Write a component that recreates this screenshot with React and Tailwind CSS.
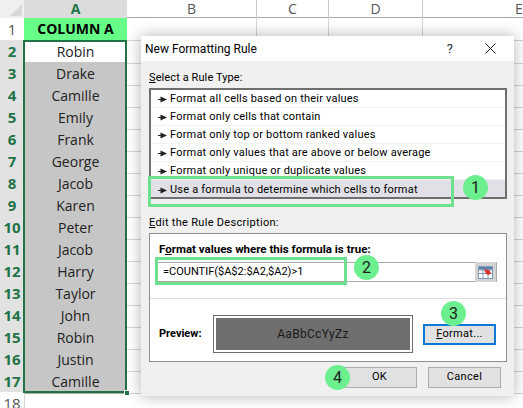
const names = ["Robin", "Drake", "Camille", "Emily", "Frank", "George", "Jacob", "Karen", "Peter", "Jacob", "Harry", "Taylor", "John", "Robin", "Justin", "Camille"];

const ruleTypes = [
  "Format all cells based on their values",
  "Format only cells that contain",
  "Format only top or bottom ranked values",
  "Format only values that are above or below average",
  "Format only unique or duplicate values",
  "Use a formula to determine which cells to format",
];

function Arrow() {
  return (
    <svg width="9" height="7" viewBox="0 0 9 7" className="shrink-0">
      <path d="M0 3h4v1H0z" fill="#222" />
      <path d="M2.5 0.5L9 3.5 2.5 6.5z" fill="#222" />
    </svg>
  );
}

function Step({ n, className }) {
  return (
    <div className={`absolute flex h-[25px] w-[25px] items-center justify-center rounded-full bg-[#6cf08f] text-[16px] text-[#222] ${className}`}>
      {n}
    </div>
  );
}

function RefIcon() {
  return (
    <svg width="15" height="15" viewBox="0 0 15 15">
      <rect x="0.5" y="1.5" width="14" height="12" fill="#fff" stroke="#7f9db9" />
      <path d="M0.5 5h14M0.5 8.5h14M5 1.5v12M10 1.5v12" stroke="#7f9db9" strokeWidth="1" />
      <rect x="1" y="2" width="13" height="2.5" fill="#5b7fa8" />
      <path d="M6 4l5 1 2 3-2 2-3-1z" fill="#d9322c" />
    </svg>
  );
}

function Sheet() {
  return (
    <div className="font-['Open_Sans',sans-serif] text-[#222]">
      <div className="grid h-[18px] grid-cols-[24px_103px_130px_72px_94px_100px] border-b border-[#a6a6a6] bg-white text-[14px] leading-[18px] text-[#555]">
        <div className="flex items-end justify-end bg-[#f0f0f0] p-[2px]">
          <div className="h-0 w-0 border-b-[12px] border-l-[12px] border-b-[#d8d8d8] border-l-transparent" />
        </div>
        <div className="bg-[#dcdcdc] text-center font-bold text-[#217346]">A</div>
        <div className="border-r border-[#c8c8c8] text-center">B</div>
        <div className="border-r border-[#c8c8c8] text-center">C</div>
        <div className="border-r border-[#c8c8c8] text-center">D</div>
        <div className="pl-[92px]">E</div>
      </div>
      <div className="grid h-[22px] grid-cols-[24px_103px_130px_72px_94px_100px]">
        <div className="border-b border-[#d4d4d4] bg-white text-center text-[15px] leading-[22px] text-[#555]">1</div>
        <div className="bg-[#66ff88] text-center text-[14px] font-bold leading-[22px] text-black">COLUMN A</div>
        <div className="border-b border-r border-[#d4d4d4]" />
        <div className="border-b border-r border-[#d4d4d4]" />
        <div className="border-b border-r border-[#d4d4d4]" />
        <div className="border-b border-[#d4d4d4]" />
      </div>
      {names.map((name, i) => (
        <div key={i} className="grid h-[22px] grid-cols-[24px_103px_130px_72px_94px_100px]">
          <div className="border-b border-[#c8c8c8] bg-[#e2e2e2] text-center text-[15px] font-bold leading-[22px] text-[#217346]">{i + 2}</div>
          <div className={`border-b text-center text-[14px] leading-[23px] ${i === 0 ? "border-[#d4d4d4] bg-white" : "border-[#aaaaaa] bg-[#c6c6c6]"}`}>{name}</div>
          <div className="border-b border-r border-[#d4d4d4]" />
          <div className="border-b border-r border-[#d4d4d4]" />
          <div className="border-b border-r border-[#d4d4d4]" />
          <div className="border-b border-[#d4d4d4]" />
        </div>
      ))}
      <div className="grid h-[22px] grid-cols-[24px_103px_130px_72px_94px_100px]">
        <div className="bg-white text-center text-[15px] leading-[22px] text-[#555]">18</div>
        <div className="border-l border-[#d4d4d4]" />
      </div>
    </div>
  );
}

function Dialog() {
  return (
    <div className="absolute left-[141px] top-[36px] h-[360px] w-[373px] bg-[#f0f0f0] font-['Roboto',sans-serif] text-[11px] text-black shadow-[0_0_14px_rgba(0,0,0,0.3)]">
      <div className="flex h-[25px] items-center bg-white pl-[4px] pr-[18px] text-[12px]">
        <span className="flex-1">New Formatting Rule</span>
        <span className="mr-[32px] text-[13px] text-[#333]">?</span>
        <svg width="11" height="11" viewBox="0 0 11 11">
          <path d="M0.5 0.5l10 10M10.5 0.5l-10 10" stroke="#222" strokeWidth="1" />
        </svg>
      </div>

      <div className="px-[8px]">
        <div className="h-[27px] pt-[9px] leading-[16px] tracking-[0.1px]">
          <u>S</u>elect a Rule Type:
        </div>
        <div className="h-[111px] w-[358px] overflow-hidden border-2 border-[#6f6f6f] bg-white">
          {ruleTypes.map((rule, i) => (
            <div
              key={rule}
              className={`flex h-[18px] items-center gap-[3px] pl-[7px] pt-[2px] tracking-[0.2px] ${i === 5 ? "bg-[#e0e0e6]" : "border-b border-[#f2f2f2]"}`}
            >
              <Arrow />
              <span>{rule}</span>
            </div>
          ))}
        </div>
        <div className="h-[34px] pt-[16px] leading-[16px] tracking-[0.3px]">
          <u>E</u>dit the Rule Description:
        </div>
        <div className="h-[129px] w-[358px] border border-[#8f8f8f] bg-white">
          <div className="px-[9px] pt-[7px] text-[11.5px] font-bold leading-[16px]">
            F<u>o</u>rmat values where this formula is true:
          </div>
          <div className="ml-[5px] mt-[5px] flex h-[20px] w-[342px] items-center justify-between border border-[#ababab] pl-[7px] pr-0 text-[11px]">
            <span className="pt-[1px]">=COUNTIF($A$2:$A2,$A2)&gt;1</span>
            <div className="flex h-[20px] w-[21px] items-center justify-center bg-[#d4d4d4]">
              <RefIcon />
            </div>
          </div>
          <div className="mt-[16px] border-t border-[#e0e0e0]" />
          <div className="flex items-start px-[9px] pt-[16px]">
            <div className="w-[54px] pt-[11px] font-bold leading-[16px]">Preview:</div>
            <div className="h-[38px] w-[200px] border border-[#6f6f6f] bg-white p-[2px]">
              <div className="flex h-full items-center justify-center bg-[#6f6f6f] text-[12px] tracking-[0.3px] text-[#1a1a1a]">
                AaBbCcYyZz
              </div>
            </div>
            <button className="ml-[10px] mt-[9px] h-[21px] w-[73px] border-2 border-[#0f78d4] bg-[#e1e1e1] tracking-[0.3px]">
              <u>F</u>ormat...
            </button>
          </div>
        </div>
        <div className="mt-[5px] flex justify-end gap-[11px] pr-[5px] tracking-[0.3px]">
          <button className="h-[21px] w-[75px] border border-[#adadad] bg-[#e1e1e1]">OK</button>
          <button className="h-[21px] w-[73px] border border-[#adadad] bg-[#e1e1e1]">Cancel</button>
        </div>
      </div>

      {/* callouts */}
      <div className="absolute left-[7px] top-[140px] h-[31px] w-[306px] border-[3px] border-[#6fe08f]" />
      <div className="absolute left-[14px] top-[221px] h-[28px] w-[192px] border-[3px] border-[#6fe08f]" />
      <Step n="1" className="left-[322px] top-[139px]" />
      <Step n="2" className="left-[213px] top-[219px]" />
      <Step n="3" className="left-[300px] top-[265px]" />
      <Step n="4" className="left-[184px] top-[329px]" />
    </div>
  );
}

export default function App() {
  return (
    <div className="relative h-[408px] w-[523px] overflow-hidden bg-white">
      <Sheet />
      {/* selection around column A */}
      <div className="absolute left-[23px] top-[40px] h-[353px] w-[104px] border-2 border-[#217346]" />
      <div className="absolute left-[124px] top-[390px] h-[6px] w-[6px] border border-white bg-[#217346]" />
      <Dialog />
    </div>
  );
}
